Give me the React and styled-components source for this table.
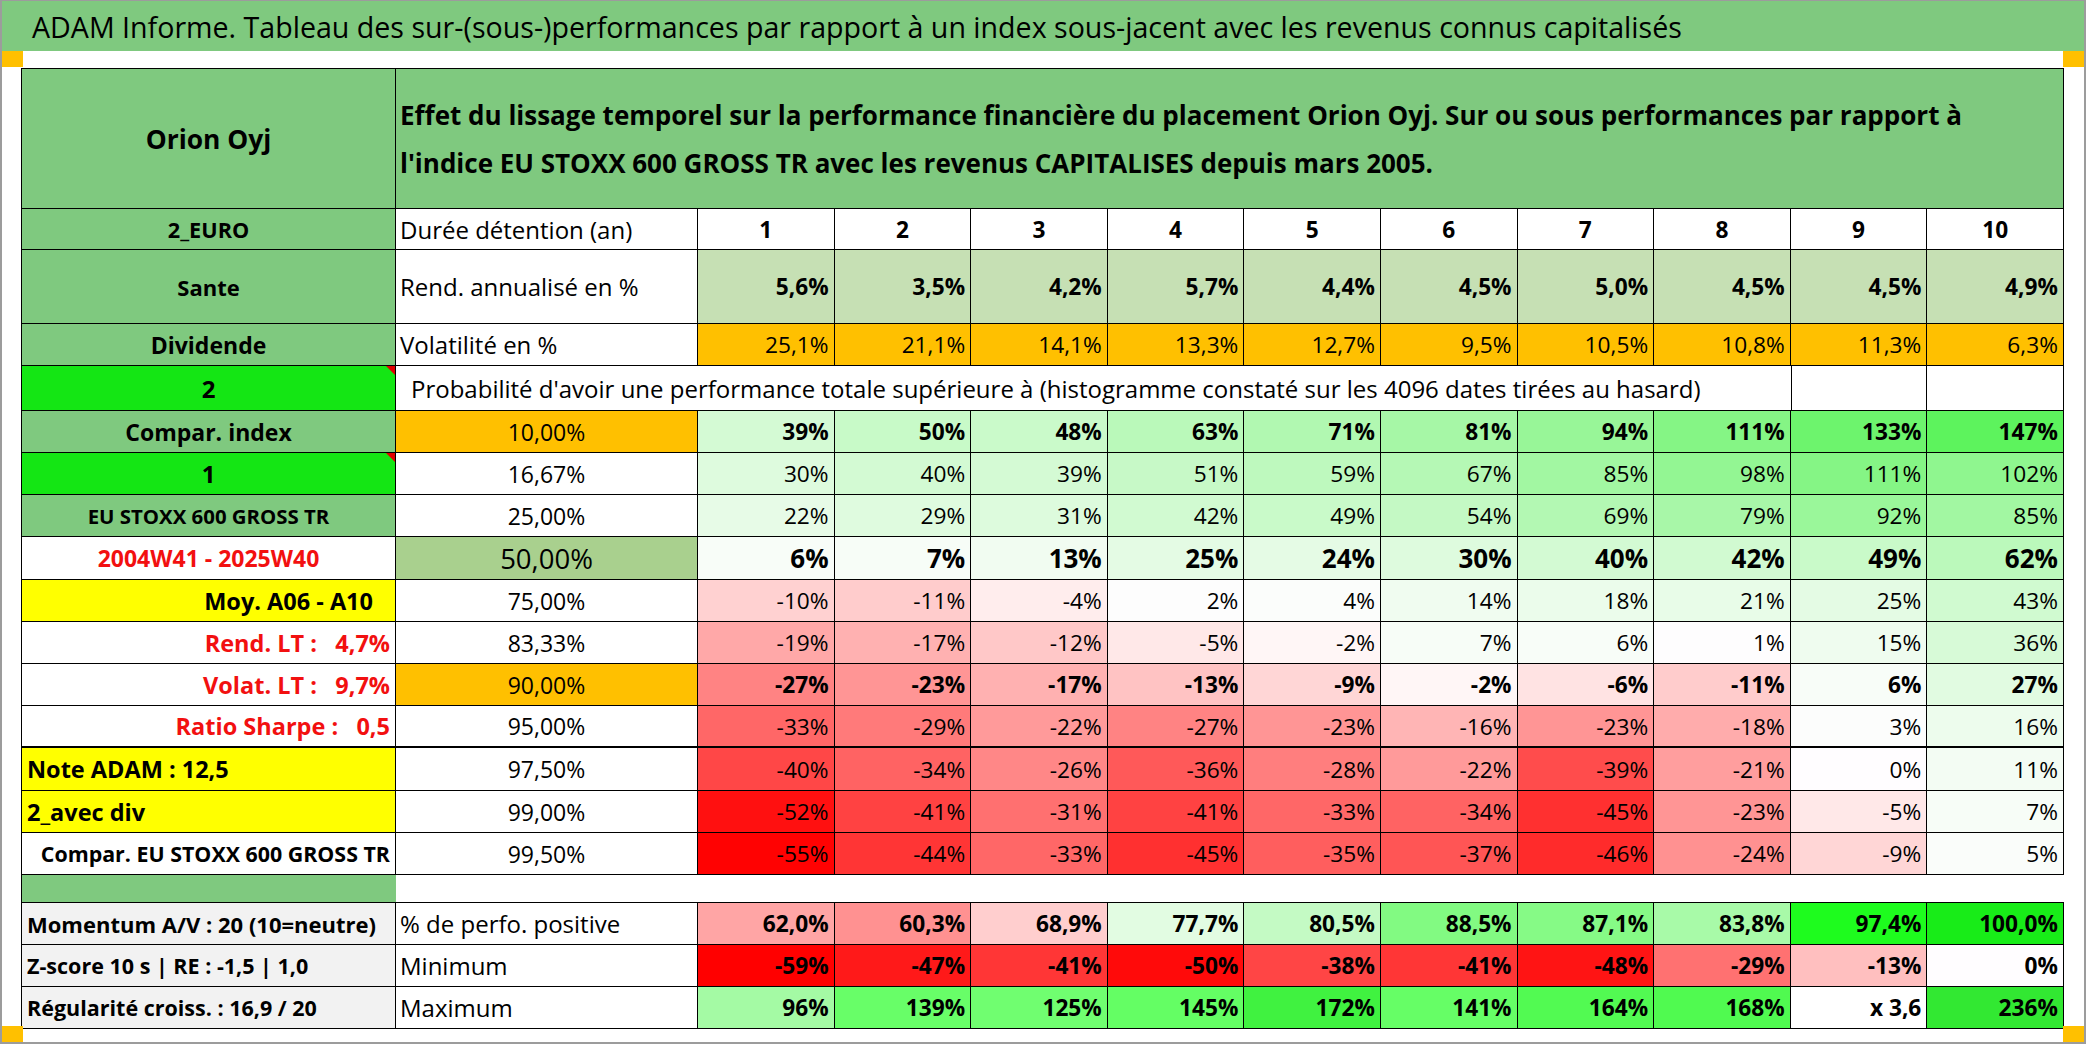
import React from 'react';
import styled, { createGlobalStyle } from 'styled-components';

const GREEN = '#7fc97f';
const BRIGHT = '#14e614';
const ORANGE = '#ffc000';
const YELLOW = '#ffff00';
const LIGHTGREEN = '#c6e0b4';
const MIDGREEN = '#a9d08e';
const GREY = '#f2f2f2';
const RED = '#f21010';

const LABEL = 23;
const TEXT = 24;
const NUM = 22.7;

const GlobalStyle = createGlobalStyle`
  html, body {
    margin: 0;
    padding: 0;
    background: #fff;
  }
  body {
    font-family: "Open Sans", "Noto Sans", sans-serif;
    color: #000;
  }
`;

const Frame = styled.div`
  position: relative;
  width: 2086px;
  height: 1044px;
  box-sizing: border-box;
  border: 2px solid #9c9c9c;
  border-top-width: 1px;
  overflow: hidden;
`;

const TitleBar = styled.div`
  height: 50px;
  background: ${GREEN};
  display: flex;
  align-items: center;
  padding-left: 30px;
  font-size: 28.6px;
  white-space: nowrap;
`;

const Gap = styled.div`
  height: 17px;
`;

const Sheet = styled.div`
  padding-left: 19px;
`;

const Grid = styled.div`
  display: grid;
  grid-template-columns: 374px 302px repeat(10, 136.6px);
  grid-template-rows: ${p => p.$rows};
  width: max-content;
  border-left: 1px solid #000;
  border-top: 1px solid #000;
`;

const Cell = styled.div`
  position: relative;
  box-sizing: border-box;
  display: flex;
  align-items: center;
  justify-content: ${p => (p.$align === 'left' ? 'flex-start' : p.$align === 'right' ? 'flex-end' : 'center')};
  padding: 0 ${p => p.$pr ?? 5}px 0 ${p => p.$pl ?? 5}px;
  background: ${p => p.$bg || '#fff'};
  color: ${p => p.$color || '#000'};
  font-weight: ${p => (p.$bold ? 700 : 400)};
  font-size: ${p => p.$size || TEXT}px;
  border-left: ${p => (p.$lineLeft ? '1px solid #000' : 'none')};
  border-right: ${p => (p.$open ? 'none' : '1px solid #000')};
  border-bottom: ${p => (p.$thick ? 2 : 1)}px solid #000;
  grid-column: span ${p => p.$span || 1};
  white-space: pre;
`;

const LabelCell = styled(Cell).attrs(p => ({ $bold: true, $size: p.$size || LABEL }))``;
const NumCell = styled(Cell).attrs(p => ({ $align: p.$align || 'right', $size: p.$size || NUM }))``;

const HeadText = styled.div`
  font-size: 26px;
  font-weight: 700;
  line-height: 48px;
  white-space: nowrap;
`;

const Flag = styled.span`
  position: absolute;
  top: 0;
  right: 0;
  width: 0;
  height: 0;
  border-top: 9px solid #e00000;
  border-left: 9px solid transparent;
`;

const Corner = styled.span`
  position: absolute;
  width: 21px;
  height: 16px;
  background: ${ORANGE};
  ${p => (p.$right ? 'right: 0;' : 'left: 0;')}
  ${p => (p.$bottom ? 'bottom: 0;' : 'top: 50px;')}
`;

const heat = (v, negK = 4.6) => {
  if (v < 0) {
    const c = Math.max(0, Math.round(255 - negK * -v));
    return `rgb(255,${c},${c})`;
  }
  const c = Math.max(0, Math.round(255 - 1.1 * v));
  const g = Math.round(253 - 0.07 * v);
  return `rgb(${c},${g},${c})`;
};

const pct = v => `${v}%`;

const rowHeights = [140, 41, 74, 42, 45, 42, 42, 42, 43, 42, 42, 42, 42, 43, 42, 42, 28, 42, 42, 42];

const rend = ['5,6%', '3,5%', '4,2%', '5,7%', '4,4%', '4,5%', '5,0%', '4,5%', '4,5%', '4,9%'];
const vola = ['25,1%', '21,1%', '14,1%', '13,3%', '12,7%', '9,5%', '10,5%', '10,8%', '11,3%', '6,3%'];

const blockRows = [
  { label: 'Compar. index', labelBg: GREEN, level: '10,00%', levelBg: ORANGE, levelSize: 23, bold: true,
    vals: [39, 50, 48, 63, 71, 81, 94, 111, 133, 147] },
  { label: '1', labelBg: BRIGHT, labelSize: 24, flag: true, level: '16,67%',
    vals: [30, 40, 39, 51, 59, 67, 85, 98, 111, 102] },
  { label: 'EU STOXX 600 GROSS TR', labelBg: GREEN, labelSize: 20.4, level: '25,00%',
    vals: [22, 29, 31, 42, 49, 54, 69, 79, 92, 85] },
  { label: '2004W41 - 2025W40', labelColor: RED, labelSize: 23, level: '50,00%', levelBg: MIDGREEN, levelSize: 27.5, bold: true, size: 26,
    vals: [6, 7, 13, 25, 24, 30, 40, 42, 49, 62] },
  { label: 'Moy. A06 - A10', labelBg: YELLOW, labelSize: 23.5, align: 'right', pr: 22, level: '75,00%',
    vals: [-10, -11, -4, 2, 4, 14, 18, 21, 25, 43] },
  { label: 'Rend. LT :   4,7%', labelColor: RED, labelSize: 23.5, align: 'right', level: '83,33%',
    vals: [-19, -17, -12, -5, -2, 7, 6, 1, 15, 36] },
  { label: 'Volat. LT :   9,7%', labelColor: RED, labelSize: 23.5, align: 'right', level: '90,00%', levelBg: ORANGE, bold: true,
    vals: [-27, -23, -17, -13, -9, -2, -6, -11, 6, 27] },
  { label: 'Ratio Sharpe :   0,5', labelColor: RED, labelSize: 23.5, align: 'right', level: '95,00%', thick: true,
    vals: [-33, -29, -22, -27, -23, -16, -23, -18, 3, 16] },
  { label: 'Note ADAM : 12,5', labelBg: YELLOW, labelSize: 23.5, align: 'left', level: '97,50%',
    vals: [-40, -34, -26, -36, -28, -22, -39, -21, 0, 11] },
  { label: '2_avec div', labelBg: YELLOW, labelSize: 23.5, align: 'left', level: '99,00%',
    vals: [-52, -41, -31, -41, -33, -34, -45, -23, -5, 7] },
  { label: 'Compar. EU STOXX 600 GROSS TR', labelSize: 21.4, align: 'right', level: '99,50%',
    vals: [-55, -44, -33, -45, -35, -37, -46, -24, -9, 5] },
];

const statRows = [
  { label: 'Momentum A/V : 20 (10=neutre)', labelSize: 22, name: '% de perfo. positive',
    vals: ['62,0%', '60,3%', '68,9%', '77,7%', '80,5%', '88,5%', '87,1%', '83,8%', '97,4%', '100,0%'],
    bgs: ['rgb(255,165,165)', 'rgb(255,145,145)', 'rgb(255,206,206)', 'rgb(226,252,226)', 'rgb(196,250,196)',
      'rgb(130,250,130)', 'rgb(134,250,134)', 'rgb(168,250,168)', 'rgb(30,252,30)', 'rgb(24,236,24)'] },
  { label: 'Z-score 10 s | RE : -1,5 | 1,0', labelSize: 21.5, name: 'Minimum',
    vals: ['-59%', '-47%', '-41%', '-50%', '-38%', '-41%', '-48%', '-29%', '-13%', '0%'],
    bgs: [-59, -47, -41, -50, -38, -41, -48, -29, -13, 0].map(v => heat(v, 4.9)) },
  { label: 'Régularité croiss. : 16,9 / 20', labelSize: 21.5, name: 'Maximum',
    vals: ['96%', '139%', '125%', '145%', '172%', '141%', '164%', '168%', 'x 3,6', '236%'],
    bgs: ['rgb(164,250,164)', 'rgb(104,254,104)', 'rgb(112,254,112)', 'rgb(100,254,100)', 'rgb(64,242,64)',
      'rgb(102,254,102)', 'rgb(82,250,82)', 'rgb(80,250,80)', '#fff', 'rgb(50,232,50)'] },
];

export default function App() {
  return (
    <>
      <GlobalStyle />
      <Frame>
        <TitleBar>
          ADAM Informe. Tableau des sur-(sous-)performances par rapport à un index sous-jacent avec les revenus connus capitalisés
        </TitleBar>
        <Gap />
        <Sheet>
          <Grid $rows={rowHeights.map(h => `${h}px`).join(' ')}>
            <LabelCell $bg={GREEN} $size={26.4}>Orion Oyj</LabelCell>
            <Cell $span={11} $bg={GREEN} $align="left" $pl={4}>
              <div>
                <HeadText>Effet du lissage temporel sur la performance financière du placement Orion Oyj. Sur ou sous performances par rapport à</HeadText>
                <HeadText>l'indice EU STOXX 600 GROSS TR avec les revenus CAPITALISES depuis mars 2005.</HeadText>
              </div>
            </Cell>

            <LabelCell $bg={GREEN} $size={21.7}>2_EURO</LabelCell>
            <Cell $align="left" $pl={4}>Durée détention (an)</Cell>
            {Array.from({ length: 10 }, (_, i) => (
              <NumCell key={i} $align="center" $bold>{i + 1}</NumCell>
            ))}

            <LabelCell $bg={GREEN} $size={22}>Sante</LabelCell>
            <Cell $align="left" $pl={4}>Rend. annualisé en %</Cell>
            {rend.map((v, i) => (
              <NumCell key={i} $bg={LIGHTGREEN} $bold>{v}</NumCell>
            ))}

            <LabelCell $bg={GREEN}>Dividende</LabelCell>
            <Cell $align="left" $pl={4}>Volatilité en %</Cell>
            {vola.map((v, i) => (
              <NumCell key={i} $bg={ORANGE}>{v}</NumCell>
            ))}

            <LabelCell $bg={BRIGHT} $size={24}>2<Flag /></LabelCell>
            <Cell $span={9} $align="left" $pl={15} $open>
              Probabilité d'avoir une performance totale supérieure à (histogramme constaté sur les 4096 dates tirées au hasard)
            </Cell>
            <Cell $lineLeft />
            <Cell />

            {blockRows.map((r, ri) => (
              <React.Fragment key={ri}>
                <LabelCell
                  $bg={r.labelBg}
                  $color={r.labelColor}
                  $size={r.labelSize}
                  $align={r.align}
                  $pr={r.pr}
                  $thick={r.thick}
                >
                  {r.label}
                  {r.flag && <Flag />}
                </LabelCell>
                <Cell $bg={r.levelBg} $size={r.levelSize || 23} $thick={r.thick}>{r.level}</Cell>
                {r.vals.map((v, i) => (
                  <NumCell key={i} $bg={heat(v)} $bold={r.bold} $size={r.size} $thick={r.thick}>
                    {pct(v)}
                  </NumCell>
                ))}
              </React.Fragment>
            ))}

            <LabelCell $bg={GREEN} $open />
            <Cell $span={11} $open />

            {statRows.map((r, ri) => (
              <React.Fragment key={ri}>
                <LabelCell $bg={GREY} $size={r.labelSize} $align="left">{r.label}</LabelCell>
                <Cell $align="left" $pl={4}>{r.name}</Cell>
                {r.vals.map((v, i) => (
                  <NumCell key={i} $bg={r.bgs[i]} $bold>{v}</NumCell>
                ))}
              </React.Fragment>
            ))}
          </Grid>
        </Sheet>
        <Corner />
        <Corner $right />
        <Corner $bottom />
        <Corner $bottom $right />
      </Frame>
    </>
  );
}
